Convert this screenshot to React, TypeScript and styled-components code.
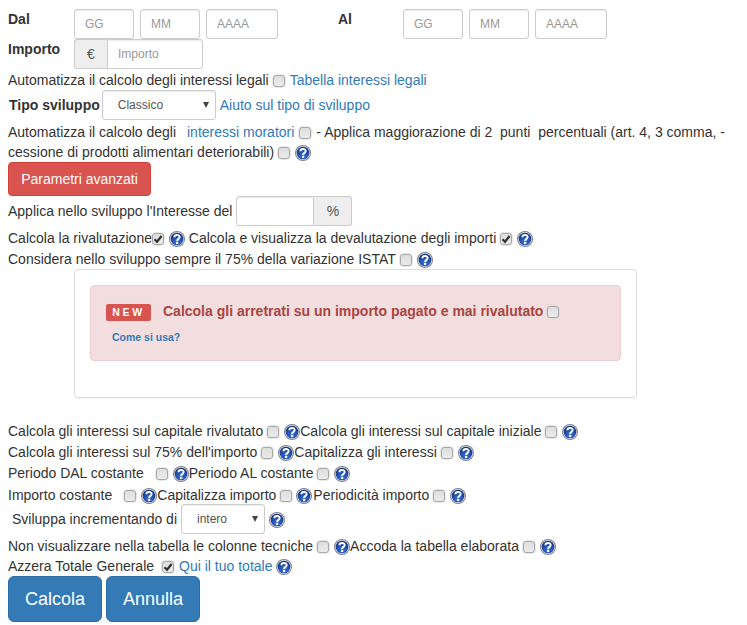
import React from "react";
import styled, { createGlobalStyle } from "styled-components";

const Global = createGlobalStyle`
  html, body { margin: 0; padding: 0; background: #fff; }
  body { font-family: "Liberation Sans", Arial, sans-serif; font-size: 14px; line-height: 20px; color: #333; }
`;

const Page = styled.form`
  width: 747px;
  height: 625px;
  box-sizing: border-box;
  padding-top: 9px;
  overflow: hidden;
`;

const Line = styled.div<{ $h?: number; $pl?: number; $mt?: number }>`
  display: flex;
  align-items: center;
  height: ${(p) => p.$h ?? 21}px;
  padding-left: ${(p) => p.$pl ?? 8}px;
  margin-top: ${(p) => p.$mt ?? 0}px;
  white-space: pre;
`;

const Text = styled.span<{ $ml?: number }>`
  margin-left: ${(p) => p.$ml ?? 0}px;
`;

const FieldLine = styled.div`
  display: flex;
  height: 30px;
  padding-left: 8px;
`;

const Label = styled.label<{ $w: number }>`
  width: ${(p) => p.$w}px;
  font-weight: 700;
  line-height: 20px;
`;

const Field = styled.input<{ $w: number; $ml?: number }>`
  box-sizing: border-box;
  width: ${(p) => p.$w}px;
  height: 30px;
  margin: 0 0 0 ${(p) => p.$ml ?? 0}px;
  padding: 5px 10px;
  border: 1px solid #ccc;
  border-radius: 3px;
  font: 12px/18px "Liberation Sans", Arial, sans-serif;
  color: #555;
  background: #fff;
  box-shadow: inset 0 1px 1px rgba(0, 0, 0, 0.075);
  outline: none;
  &::placeholder { color: #999; opacity: 1; }
`;

const Group = styled.div<{ $ml?: number }>`
  display: flex;
  margin-left: ${(p) => p.$ml ?? 0}px;
`;

const Addon = styled.span<{ $w: number; $side: "left" | "right" }>`
  box-sizing: border-box;
  width: ${(p) => p.$w}px;
  height: 30px;
  display: flex;
  align-items: center;
  justify-content: center;
  background: #eee;
  border: 1px solid #ccc;
  font-size: 14px;
  color: #555;
  border-radius: ${(p) => (p.$side === "left" ? "3px 0 0 3px" : "0 3px 3px 0")};
  ${(p) => (p.$side === "left" ? "border-right: 0;" : "border-left: 0;")}
`;

const GroupField = styled(Field)<{ $side: "left" | "right" }>`
  border-radius: ${(p) => (p.$side === "left" ? "3px 0 0 3px" : "0 3px 3px 0")};
`;

const Link = styled.a<{ $ml?: number }>`
  color: #337ab7;
  text-decoration: none;
  margin-left: ${(p) => p.$ml ?? 0}px;
`;

const BoldText = styled.b<{ $mr?: number }>`
  font-weight: 700;
  margin-right: ${(p) => p.$mr ?? 0}px;
`;

const Box = styled.span<{ $ml?: number }>`
  box-sizing: border-box;
  flex: none;
  width: 12px;
  height: 12px;
  margin: 2px 0 0 ${(p) => p.$ml ?? 4}px;
  display: inline-flex;
  align-items: center;
  justify-content: center;
  border: 1px solid #a8a8a8;
  border-radius: 3px;
  background: linear-gradient(#dedede, #ebebeb);
  box-shadow: 0 0 0 0.5px #d4d4d4;
`;

const Tick = styled.svg`
  width: 10px;
  height: 10px;
`;

function Check({ on, ml }: { on?: boolean; ml?: number }) {
  return (
    <Box $ml={ml}>
      {on && (
        <Tick viewBox="0 0 10 10">
          <path d="M1.5 5.2 L4 7.8 L8.6 2" fill="none" stroke="#333" strokeWidth="2.2" />
        </Tick>
      )}
    </Box>
  );
}

const HelpIcon = styled.svg<{ $ml?: number }>`
  flex: none;
  width: 16px;
  height: 16px;
  margin: 2px 0 0 ${(p) => p.$ml ?? 5}px;
`;

function Help({ ml }: { ml?: number }) {
  const id = "helpBlue";
  return (
    <HelpIcon viewBox="0 0 16 16" $ml={ml}>
      <defs>
        <radialGradient id={id} cx="50%" cy="72%" r="68%">
          <stop offset="0%" stopColor="#3d74d8" />
          <stop offset="65%" stopColor="#1e49a6" />
          <stop offset="100%" stopColor="#14327c" />
        </radialGradient>
      </defs>
      <circle cx="8" cy="8" r="8" fill="#7f838b" />
      <circle cx="8" cy="8" r="7" fill="#dfe2ea" />
      <circle cx="8" cy="8" r="6.3" fill={`url(#${id})`} />
      <path d="M5.4 6.2 C5.4 3.3 10.7 3.3 10.7 6.1 C10.7 8 8.1 7.8 8.1 10" fill="none" stroke="#fff" strokeWidth="1.9" />
      <rect x="7" y="10.9" width="2.2" height="2.1" fill="#fff" />
    </HelpIcon>
  );
}

const SelectWrap = styled.span<{ $w: number; $ml?: number }>`
  position: relative;
  flex: none;
  display: inline-block;
  width: ${(p) => p.$w}px;
  height: 30px;
  margin-left: ${(p) => p.$ml ?? 0}px;
`;

const Select = styled.select`
  appearance: none;
  box-sizing: border-box;
  width: 100%;
  height: 30px;
  margin: 0;
  padding: 5px 10px 5px 15px;
  border: 1px solid #ccc;
  border-radius: 3px;
  background: #fff;
  color: #555;
  font: 12px "Liberation Sans", Arial, sans-serif;
  box-shadow: inset 0 1px 1px rgba(0, 0, 0, 0.075);
  outline: none;
`;

const Caret = styled.span`
  position: absolute;
  right: 7px;
  top: 12px;
  width: 0;
  height: 0;
  border-left: 3px solid transparent;
  border-right: 3px solid transparent;
  border-top: 6px solid #444;
  pointer-events: none;
`;

function Dropdown({ w, value, ml }: { w: number; value: string; ml?: number }) {
  return (
    <SelectWrap $w={w} $ml={ml}>
      <Select defaultValue={value}>
        <option>{value}</option>
      </Select>
      <Caret />
    </SelectWrap>
  );
}

const Button = styled.button<{ $tone: "red" | "blue"; $lg?: boolean; $w: number; $ml?: number }>`
  box-sizing: border-box;
  width: ${(p) => p.$w}px;
  height: ${(p) => (p.$lg ? 46 : 34)}px;
  margin-left: ${(p) => p.$ml ?? 0}px;
  padding: 0;
  border: 1px solid ${(p) => (p.$tone === "red" ? "#d43f3a" : "#2e6da4")};
  border-radius: ${(p) => (p.$lg ? 6 : 4)}px;
  background: ${(p) => (p.$tone === "red" ? "#d9534f" : "#337ab7")};
  color: #fff;
  font: ${(p) => (p.$lg ? 18 : 14)}px "Liberation Sans", Arial, sans-serif;
`;

const ButtonRow = styled.div`
  display: flex;
  padding-left: 8px;
`;

const Card = styled.section`
  box-sizing: border-box;
  width: 563px;
  height: 129px;
  margin: 0 0 22px 74px;
  padding: 15px;
  background: #fff;
  border: 1px solid #ddd;
  border-radius: 4px;
  box-shadow: 0 1px 1px rgba(0, 0, 0, 0.05);
`;

const Alert = styled.div`
  box-sizing: border-box;
  height: 76px;
  padding: 15px;
  background: #f2dede;
  border: 1px solid #ebccd1;
  border-radius: 4px;
  color: #a94442;
`;

const AlertHead = styled.div`
  display: flex;
  align-items: center;
  height: 20px;
  white-space: pre;
`;

const NewBadge = styled.span`
  box-sizing: border-box;
  width: 45px;
  height: 17px;
  margin: 2px 12px 0 0;
  display: flex;
  align-items: center;
  justify-content: center;
  background: #d9534f;
  border-radius: 2px;
  color: #fff;
  font-size: 10.5px;
  font-weight: 700;
  letter-spacing: 2.6px;
`;

const UsageLink = styled.a`
  display: block;
  margin: 9px 0 0 6px;
  color: #337ab7;
  font-size: 10.5px;
  font-weight: 700;
  line-height: 15px;
  text-decoration: none;
`;

export default function App() {
  return (
    <Page>
      <Global />
      <FieldLine>
        <Label $w={66}>Dal</Label>
        <Field $w={60} placeholder="GG" />
        <Field $w={60} $ml={6} placeholder="MM" />
        <Field $w={72} $ml={6} placeholder="AAAA" />
        <Label $w={60}>{""}</Label>
        <Label $w={60}>Al</Label>
        <Field $w={60} $ml={5} placeholder="GG" />
        <Field $w={60} $ml={6} placeholder="MM" />
        <Field $w={72} $ml={6} placeholder="AAAA" />
      </FieldLine>
      <FieldLine>
        <Label $w={66}>Importo</Label>
        <Group>
          <Addon $w={33} $side="left">€</Addon>
          <GroupField $w={96} $side="right" placeholder="Importo" />
        </Group>
      </FieldLine>
      <Line>
        <Text>Automatizza il calcolo degli interessi legali</Text>
        <Check />
        <Link $ml={5}>Tabella interessi legali</Link>
      </Line>
      <Line $h={30} $pl={9}>
        <BoldText $mr={2}>Tipo sviluppo</BoldText>
        <Dropdown w={114} value="Classico" />
        <Link $ml={4}>Aiuto sul tipo di sviluppo</Link>
      </Line>
      <Line $h={20} $mt={2}>
        <Text>Automatizza il calcolo degli </Text>
        <Link $ml={7}>interessi moratori</Link>
        <Check ml={5} />
        <Text $ml={5}>- Applica maggiorazione di 2  punti  percentuali (art. 4, 3 comma, -</Text>
      </Line>
      <Line $h={20}>
        <Text>cessione di prodotti alimentari deteriorabili)</Text>
        <Check />
        <Help />
      </Line>
      <ButtonRow>
        <Button type="button" $tone="red" $w={143}>Parametri avanzati</Button>
      </ButtonRow>
      <Line $h={30}>
        <Text>Applica nello sviluppo l'Interesse del</Text>
        <Group $ml={4}>
          <GroupField $w={78} $side="left" />
          <Addon $w={38} $side="right">%</Addon>
        </Group>
      </Line>
      <Line $mt={1}>
        <Text>Calcola la rivalutazione</Text>
        <Check on ml={0} />
        <Help />
        <Text> Calcola e visualizza la devalutazione degli importi</Text>
        <Check on />
        <Help />
      </Line>
      <Line $h={20} $mt={1}>
        <Text>Considera nello sviluppo sempre il 75% della variazione ISTAT</Text>
        <Check />
        <Help />
      </Line>
      <Card>
        <Alert>
          <AlertHead>
            <NewBadge>NEW</NewBadge>
            <BoldText>Calcola gli arretrati su un importo pagato e mai rivalutato</BoldText>
            <Check />
          </AlertHead>
          <UsageLink>Come si usa?</UsageLink>
        </Alert>
      </Card>
      <Line>
        <Text>Calcola gli interessi sul capitale rivalutato</Text>
        <Check />
        <Help />
        <Text>Calcola gli interessi sul capitale iniziale</Text>
        <Check />
        <Help />
      </Line>
      <Line>
        <Text>Calcola gli interessi sul 75% dell'importo</Text>
        <Check />
        <Help />
        <Text>Capitalizza gli interessi</Text>
        <Check />
        <Help />
      </Line>
      <Line>
        <Text>Periodo DAL costante</Text>
        <Check ml={12} />
        <Help />
        <Text>Periodo AL costante</Text>
        <Check />
        <Help />
      </Line>
      <Line $mt={1}>
        <Text>Importo costante</Text>
        <Check ml={12} />
        <Help />
        <Text>Capitalizza importo</Text>
        <Check />
        <Help ml={4} />
        <Text $ml={1}>Periodicità importo</Text>
        <Check />
        <Help />
      </Line>
      <Line $h={30} $pl={12} $mt={-1}>
        <Text>Sviluppa incrementando di</Text>
        <Dropdown w={84} value="intero" ml={4} />
        <Help ml={4} />
      </Line>
      <Line $mt={1}>
        <Text>Non visualizzare nella tabella le colonne tecniche</Text>
        <Check />
        <Help />
        <Text>Accoda la tabella elaborata</Text>
        <Check />
        <Help />
      </Line>
      <Line $h={20}>
        <Text>Azzera Totale Generale</Text>
        <Check on ml={8} />
        <Link $ml={5}>Qui il tuo totale</Link>
        <Help ml={4} />
      </Line>
      <ButtonRow>
        <Button type="button" $tone="blue" $lg $w={94}>Calcola</Button>
        <Button type="button" $tone="blue" $lg $w={94} $ml={4}>Annulla</Button>
      </ButtonRow>
    </Page>
  );
}
